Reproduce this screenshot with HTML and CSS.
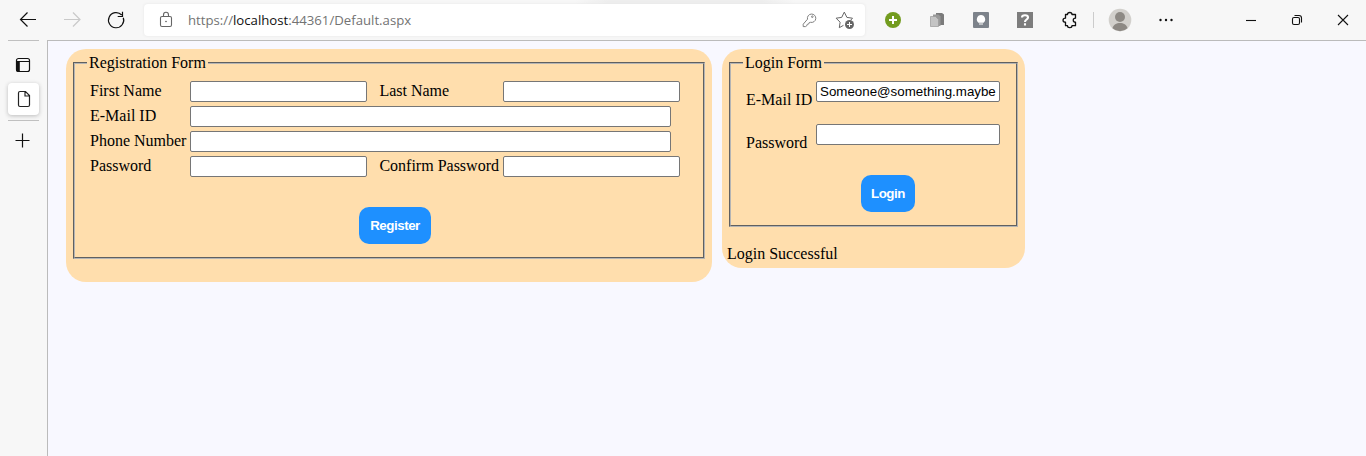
FILE: index.html
```html
<!DOCTYPE html>
<html lang="en">
<head>
<meta charset="utf-8">
<title>Default</title>
<link rel="stylesheet" href="styles.css">
</head>
<body>
<header class="toolbar">
  <svg class="nav" width="136" height="40" fill="none" stroke="#111" stroke-width="1.2">
    <path d="M36 19.500H20.500M27.500 12.500l-7 7 7 7"/>
    <path stroke="#c9c9c9" d="M64 19.500h15.500M73 12.500l7 7-7 7"/>
    <path d="M123.300 17.700A7.600 7.600 0 1 1 121.700 15M122.500 11.700v4.800h-4.800"/>
  </svg>
  <div class="address">
    <svg width="44" height="32" fill="none" stroke="#666" stroke-width="1.1">
      <rect x="16.500" y="12.500" width="11" height="10" rx="1.500"/>
      <path d="M19.500 12.500v-1.600a2.500 2.700 0 0 1 5 0v1.600"/>
      <circle cx="22" cy="17.500" r=".8" fill="#555" stroke="none"/>
    </svg>
    <span class="url">https://<b>localhost</b>:44361/Default.aspx</span>
    <svg class="address-tools" width="66" height="32" fill="none" stroke="#808080" stroke-width="1">
      <path d="M8.500 15.200a4.200 4.200 0 1 1 3 3.100l-1.200.2-.6 1.500-1.500.4-.5 1.500-1.200.7H4.200v-2.400z"/>
      <circle cx="13.300" cy="12.700" r=".8"/>
      <path stroke="#666" d="M44.500 21.300l-4.200 2.400.8-5.500-4-4 5.600-.8 2.600-5.300 2.600 5.300 5.600.8-1.800 2"/>
      <circle cx="50.500" cy="20.500" r="4.500" fill="#666" stroke="none"/>
      <path stroke="#fff" d="M48 20.500h5M50.500 18v5"/>
    </svg>
  </div>
  <svg class="extensions" width="496" height="40" fill="none">
    <circle cx="23" cy="20" r="8" fill="#739c1f"/>
    <path stroke="#fff" stroke-width="2" d="M19 20h8M23 16v8"/>
    <path fill="#7b7b7b" d="M66 13h6l2 1.500V25h-8z"/>
    <path fill="#999" d="M63 14.500h5.500l2 2V26H63z"/>
    <path fill="#c4c4c4" stroke="#999" stroke-width=".7" d="M60.500 16.500h5l3 3v7h-8z"/>
    <rect x="103" y="12" width="16" height="16" rx="1" fill="#7d838b"/>
    <path fill="#fff" d="M111 15a4.300 4.300 0 0 0-2.500 7.700h5A4.300 4.300 0 0 0 111 15zM109 23.500h4v1h-4z"/>
    <path fill="#7d7d7d" d="M147 12h16v16h-16z"/>
    <path stroke="#fff" stroke-width="2.100" d="M152 17.500c0-3 6-3 6 0 0 2-3 2-3 4.500M155 23.300v2.200"/>
    <path stroke="#111" stroke-width="1.300" stroke-linejoin="round" d="M195.500 14.500h2c0-2.700 4.500-2.700 4.500 0h3.500v3.700c-3 0-3 4 0 4v3.500H202c0 2.500-4.500 2.500-4.500 0h-2v-3.500c-3.300 0-3.300-4 0-4z"/>
    <path stroke="#ccc" d="M223.500 12v16"/>
    <circle cx="250" cy="20" r="11.300" fill="#d2d0cc"/>
    <circle cx="250" cy="17" r="5" fill="#8d8984"/>
    <path fill="#8d8984" d="M242.500 28.300c1.500-7 13.500-7 15 0a11.300 11.300 0 0 1-15 0z"/>
    <g fill="#111"><circle cx="290.500" cy="20" r="1.200"/><circle cx="296" cy="20" r="1.200"/><circle cx="301.500" cy="20" r="1.200"/></g>
    <g stroke="#111" stroke-width="1.100">
      <path d="M376 20.500h10"/>
      <rect x="422.500" y="17.500" width="7" height="7" rx="1.500"/>
      <path d="M424.500 15.500h4.500a2.500 2.500 0 0 1 2.500 2.500v4.500"/>
      <path d="M468 15l10 10M478 15l-10 10"/>
    </g>
  </svg>
</header>
<div class="body">
  <aside class="tabs">
    <div class="tab">
      <svg width="16" height="16" fill="none"><rect x="1.500" y="1.500" width="13" height="13" rx="2" stroke="#111" stroke-width="1.200"/><path fill="#111" d="M1 4h3.800v11H3a2 2 0 0 1-2-2z"/><path stroke="#111" d="M2 4.500h12"/></svg>
    </div>
    <div class="tab active">
      <svg width="16" height="18" fill="none" stroke="#222" stroke-width="1.200"><path d="M4 1.500h5.500l4 4v9.500a1.500 1.500 0 0 1-1.500 1.500H4A1.500 1.500 0 0 1 2.500 15V3a1.500 1.500 0 0 1 1.500-1.500M9 1.500v4.500h4.500"/></svg>
    </div>
    <div class="add">
      <svg width="16" height="16" stroke="#111" stroke-width="1.200"><path d="M1.500 7.500h14M8.500 .5v14"/></svg>
    </div>
  </aside>
  <main class="page">
    <section class="card register">
      <fieldset>
        <legend>Registration Form</legend>
        <div class="fields">
          <label>First Name</label><input type="text"><label class="second">Last Name</label><input type="text">
          <label>E-Mail ID</label><input class="wide" type="text">
          <label>Phone Number</label><input class="wide" type="text">
          <label>Password</label><input type="password"><label class="second">Confirm Password</label><input type="password">
        </div>
        <button type="button">Register</button>
      </fieldset>
    </section>
    <section class="card login">
      <fieldset>
        <legend>Login Form</legend>
        <div class="fields">
          <label>E-Mail ID</label><input type="text" value="Someone@something.maybe">
          <label>Password</label><input type="password">
        </div>
        <button type="button">Login</button>
      </fieldset>
      <p class="status">Login Successful</p>
    </section>
  </main>
</div>
</body>
</html>
```
FILE: styles.css
```css
* { box-sizing: border-box; }
body { margin: 0; height: 456px; overflow: hidden; background: #f7f7f7; font: 16px/18px "Liberation Serif", serif; color: #000; display: flex; flex-direction: column; }
svg { display: block; flex: none; }
.toolbar { height: 40px; display: flex; flex: none; background: linear-gradient(90deg, transparent, #eee 15%, #eee 85%, transparent) 575px 0 / 220px 4px no-repeat; }
.nav { margin-right: 8px; }
.address { width: 721px; height: 32px; margin-top: 4px; background: #fff; border-radius: 4px; display: flex; align-items: center; box-shadow: 0 0 3px #e4e4e4; }
.url { font: 13.2px/20px "Open Sans", sans-serif; color: #737373; flex: 1; }
.url b { font-weight: 400; color: #111; }
.extensions { margin-left: 5px; }
.body { flex: 1; display: flex; }
.tabs { width: 47px; padding: 0 8px; display: flex; flex-direction: column; }
.tab { height: 32px; display: flex; align-items: center; justify-content: center; border-radius: 4px; }
.tab:first-child { height: 43px; border-top: 1px solid #c0c0c0; border-radius: 0; padding: 5px 2px 0 0; }
.active { background: #fff; box-shadow: 0 1px 4px #bbb; }
.add { margin-top: 5px; border-top: 1px solid #c0c0c0; padding: 12px 0 0 6px; }
.page { flex: 1; display: flex; align-items: flex-start; gap: 10px; padding: 8px 0 0 18px; background: #f8f8ff; border-top: 1px solid #bbb; border-left: 1px solid #bbb; }
.card { background: #ffdead; border-radius: 20px; padding: 5px; }
.register { width: 646px; height: 233px; }
.login { width: 303px; height: 219px; }
fieldset { margin: 0 2px; border: 2px groove #b4b4b4; padding: 9px 15px 0; display: block; }
legend { padding: 0 2px; margin-left: -3px; height: 18px; }
.register fieldset { height: 205px; }
.login fieldset { height: 173px; }
.fields { display: grid; }
.register .fields { grid-template-columns: 100px 190px 123px 177px; row-gap: 4px; }
.login .fields { grid-template-columns: 70px 184px; row-gap: 22px; }
label { line-height: 20px; height: 21px; white-space: nowrap; }
.second { margin-left: -0.6px; }
.login label { padding-top: 9px; }
input { width: 177px; height: 21px; margin: 0; padding: 1px 2px; border: 1px solid #767676; border-radius: 2px; background: #fff; font: 13.333px "Liberation Sans", Arial, sans-serif; }
.wide { width: 481px; grid-column: 2 / -1; }
.login input { width: 184px; padding: 1px 3px; }
button { display: block; height: 37px; margin: 30px auto 0; padding: 0; border: 0; border-radius: 10px; background: #1e90ff; color: #fff; font: bold 13.333px "Liberation Sans", Arial, sans-serif; letter-spacing: -0.45px; }
.register button { width: 72px; margin-left: 269px; }
.login button { width: 54px; margin-left: 115px; }
.status { margin: 18px 0 0; }
```
